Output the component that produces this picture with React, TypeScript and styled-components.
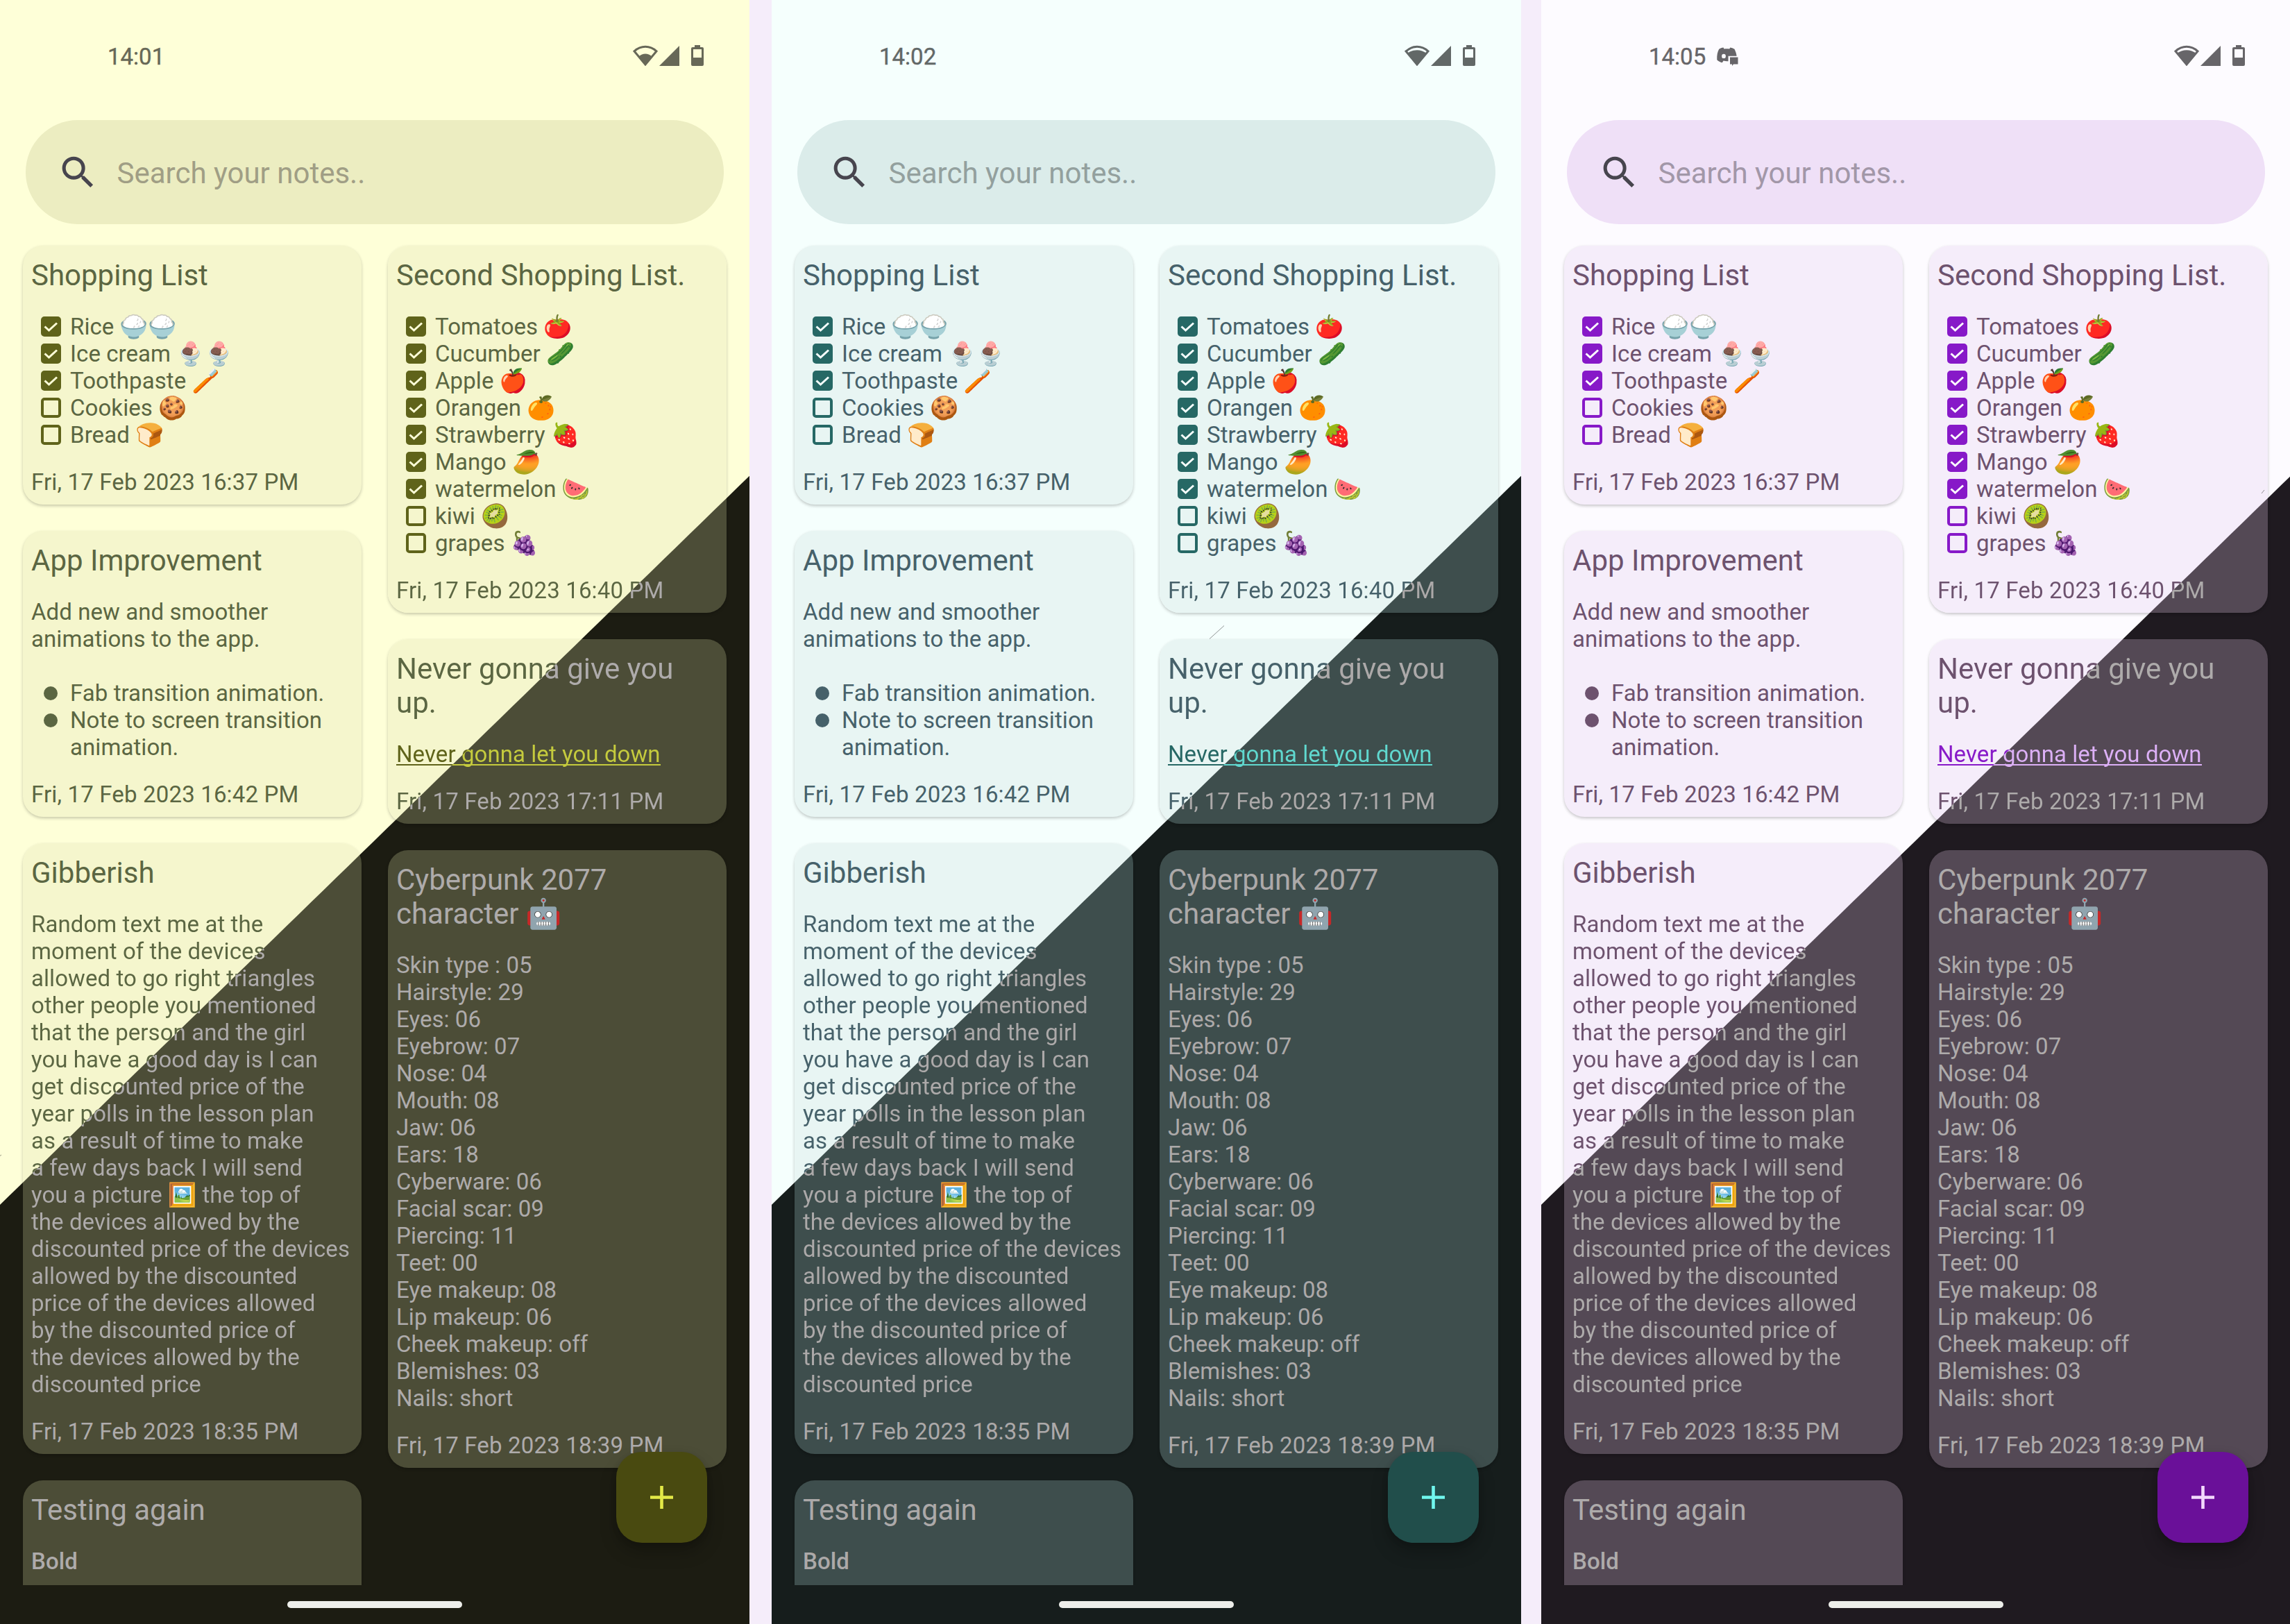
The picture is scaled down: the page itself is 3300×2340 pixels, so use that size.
import React from "react";
import styled, { createGlobalStyle, css, ThemeProvider } from "styled-components";

type Tone = "light" | "dark" | "split";

interface Palette {
  offset: number;
  lightBg: string;
  darkBg: string;
  search: string;
  searchIcon: string;
  hint: string;
  lightCard: string;
  darkCard: string;
  lightText: string;
  darkText: string;
  accent: string;
  lightLink: string;
  darkLink: string;
  fab: string;
  plus: string;
  status: string;
  check: string;
}

const olive: Palette = {
  offset: 0,
  lightBg: "#feffd8",
  darkBg: "#1c1c12",
  search: "#ecedc1",
  searchIcon: "#47454e",
  hint: "#a09e85",
  lightCard: "#f5f6cd",
  darkCard: "#4c4d37",
  lightText: "#5b6642",
  darkText: "#aeabab",
  accent: "#5f631a",
  lightLink: "#5f631a",
  darkLink: "#c5cb3d",
  fab: "#494a10",
  plus: "#e4e947",
  status: "#676857",
  check: "#feffd8",
};

const teal: Palette = {
  offset: 1112,
  lightBg: "#f5fffd",
  darkBg: "#161d1c",
  search: "#dbecea",
  searchIcon: "#47454e",
  hint: "#93a09e",
  lightCard: "#e8f5f3",
  darkCard: "#3e4e4d",
  lightText: "#46616a",
  darkText: "#aca9a9",
  accent: "#266865",
  lightLink: "#266865",
  darkLink: "#60d8cf",
  fab: "#214e4b",
  plus: "#70f7ee",
  status: "#626867",
  check: "#f5fffd",
};

const violet: Palette = {
  offset: 2221,
  lightBg: "#fdfbff",
  darkBg: "#1f1a20",
  search: "#efe0f7",
  searchIcon: "#47454e",
  hint: "#a297a8",
  lightCard: "#f5edfa",
  darkCard: "#544955",
  lightText: "#6d526e",
  darkText: "#aeabab",
  accent: "#8719c8",
  lightLink: "#8719c8",
  darkLink: "#dcb0f6",
  fab: "#6a1099",
  plus: "#f2d9fd",
  status: "#676569",
  check: "#fdfbff",
};

declare module "styled-components" {
  export interface DefaultTheme extends Palette {}
}

const GlobalStyle = createGlobalStyle`
  * { box-sizing: border-box; }
  body {
    margin: 0;
    background: #f5edfa;
    font-family: Roboto, "Noto Color Emoji", sans-serif;
  }
`;

/* The diagonal seam between day and night, anchored to the viewport so that
   every surface and line of text changes colour along the same edge. */
const seam = (p: Palette, day: string, night: string) => css`
  background-image: linear-gradient(135.8deg, ${day} 1244px, ${night} 1245px);
  background-size: 1080px 2340px;
  background-position: ${p.offset}px 0;
  background-repeat: no-repeat;
  background-attachment: fixed;
`;

const Board = styled.main`
  display: grid;
  grid-template-columns: 1080px 32px 1080px 29px 1079px;
  width: 3300px;
  height: 2340px;
  overflow: hidden;
`;

const Gutter = styled.div`
  background: #f5edfa;
`;

const Screen = styled.section`
  position: relative;
  display: flex;
  flex-direction: column;
  width: 1080px;
  height: 2340px;
  ${({ theme }) => seam(theme, theme.lightBg, theme.darkBg)}
`;

const StatusBar = styled.header`
  display: flex;
  align-items: center;
  height: 160px;
  padding: 0 66px 0 155px;
  color: ${({ theme }) => theme.status};
`;

const Clock = styled.time`
  width: 80px;
  margin: 3px 18px 0 0;
  font-size: 33px;
  font-weight: 450;
  line-height: 40px;
  -webkit-text-stroke: 0.4px currentcolor;
`;

const ChatSlot = styled.span`
  display: flex;
  padding-top: 4px;
`;

const StatusIcons = styled.div`
  display: flex;
  align-items: center;
  margin-left: auto;
`;

const SearchBar = styled.div`
  display: flex;
  align-items: center;
  height: 150px;
  margin: 13px 37px 0;
  padding-left: 45px;
  border-radius: 75px;
  background: ${({ theme }) => theme.search};
  color: ${({ theme }) => theme.searchIcon};
`;

const Hint = styled.span`
  margin-left: 25.5px;
  padding-top: 2px;
  font-size: 42px;
  line-height: 49px;
  color: ${({ theme }) => theme.hint};
`;

const Notes = styled.div`
  display: grid;
  grid-template-columns: 488px 488px;
  column-gap: 38px;
  align-items: start;
  height: 1961px;
  padding: 31px 33px 0;
  overflow: hidden;
`;

const Column = styled.div`
  display: flex;
  flex-direction: column;
  gap: 38px;
`;

const Card = styled.article<{ $tone: Tone }>`
  padding: 18px 12px 13px 12px;
  border-radius: 29px;
  box-shadow: 0 2px 4px rgba(0, 0, 0, 0.22);
  ${({ theme, $tone }) =>
    $tone === "split"
      ? seam(theme, theme.lightCard, theme.darkCard)
      : css`background-color: ${$tone === "light" ? theme.lightCard : theme.darkCard};`}
`;

const ink = css<{ $tone: Tone }>`
  color: ${({ theme, $tone }) => ($tone === "light" ? theme.lightText : theme.darkText)};
  ${({ theme, $tone }) =>
    $tone === "split" &&
    css`
      ${seam(theme, theme.lightText, theme.darkText)}
      -webkit-background-clip: text;
      background-clip: text;
      -webkit-text-fill-color: transparent;
    `}
`;

const Title = styled.h2<{ $tone: Tone }>`
  margin: 0 0 30px;
  font-size: 42px;
  font-weight: 400;
  line-height: 49px;
  white-space: pre;
  ${ink}
`;

const Body = styled.div<{ $tone: Tone; $strong?: boolean }>`
  font-size: 33px;
  line-height: 39px;
  letter-spacing: 0.07px;
  font-weight: ${({ $strong }) => ($strong ? 500 : 400)};
  white-space: pre;
  ${ink}
`;

const Line = styled.div`
  display: flex;
  height: 39px;
  white-space: pre;
`;

const Link = styled.a`
  display: block;
  width: max-content;
  height: 39px;
  color: ${({ theme }) => theme.darkLink};

  &::after {
    content: "";
    display: block;
    height: 2px;
    margin-top: -5px;
    ${({ theme }) => seam(theme, theme.lightLink, theme.darkLink)}
  }
`;

const LinkText = styled.span`
  display: block;
  font-size: 33px;
  line-height: 39px;
  letter-spacing: 0.07px;
  ${({ theme }) => seam(theme, theme.lightLink, theme.darkLink)}
  -webkit-background-clip: text;
  background-clip: text;
  -webkit-text-fill-color: transparent;
`;

const Stamp = styled.div<{ $tone: Tone }>`
  margin-top: 29px;
  font-size: 33px;
  line-height: 39px;
  letter-spacing: 0.16px;
  white-space: nowrap;
  ${ink}
`;

const Emoji = styled.span`
  -webkit-text-fill-color: currentcolor;
`;

const ListRow = styled.div`
  display: flex;
  align-items: flex-start;
  min-height: 39px;
`;

const Marker = styled.span`
  display: flex;
  align-items: center;
  flex: none;
  width: 56px;
  height: 39px;
  padding-left: 13.5px;
`;

const Box = styled.span<{ $checked: boolean }>`
  display: flex;
  align-items: center;
  justify-content: center;
  width: 29px;
  height: 29px;
  border: 4px solid ${({ theme }) => theme.accent};
  border-radius: 5px;
  background: ${({ theme, $checked }) => ($checked ? theme.accent : "transparent")};
  color: ${({ theme }) => theme.check};
`;

const Dot = styled.span`
  width: 20px;
  height: 20px;
  margin-left: 4px;
  border-radius: 50%;
  background: ${({ theme }) => theme.lightText};
`;

const HomeBar = styled.footer`
  display: flex;
  justify-content: center;
  padding-top: 23px;
  flex: 1;
`;

const Pill = styled.div`
  width: 252px;
  height: 10px;
  border-radius: 5px;
  background: #edeeea;
`;

const Fab = styled.button`
  position: absolute;
  left: 888px;
  top: 2092px;
  display: flex;
  align-items: center;
  justify-content: center;
  width: 131px;
  height: 131px;
  padding: 0;
  border: 0;
  border-radius: 37px;
  background: ${({ theme }) => theme.fab};
  color: ${({ theme }) => theme.plus};
  box-shadow: 0 14px 24px rgba(0, 0, 0, 0.22), 0 3px 8px rgba(0, 0, 0, 0.12);
`;

const Scratches = styled.svg`
  position: absolute;
  inset: 0;
  pointer-events: none;
`;

const SignalSvg = styled.svg`
  margin-left: 2px;
`;

const BatterySvg = styled.svg`
  margin-left: 17px;
`;

const WifiIcon = ({ strong }: { strong: boolean }) => (
  <svg width="36" height="30" viewBox="0 0 36 30">
    <path d="M18 28 2 8.8C11.500 .2 24.500 .2 34 8.800Z" fill="none" stroke="currentColor" strokeWidth="3" />
    <path
      d={strong ? "M18 29 4 12C12 5.600 24 5.600 32 12Z" : "M18 29 8.500 16.500C14 11 22 11 27.500 16.500Z"}
      fill="currentColor"
    />
  </svg>
);

const SignalIcon = () => (
  <SignalSvg width="29" height="29" viewBox="0 0 29 29">
    <path d="M0 29H29V0Z" fill="currentColor" />
  </SignalSvg>
);

const BatteryIcon = () => (
  <BatterySvg width="18" height="30" viewBox="0 0 18 30">
    <path
      fillRule="evenodd"
      fill="currentColor"
      d="M5 0H13V3H16Q18 3 18 5V28Q18 30 16 30H2Q0 30 0 28V5Q0 3 2 3H5ZM3 6V18H15V6Z"
    />
  </BatterySvg>
);

const ChatIcon = () => (
  <svg width="32" height="28" viewBox="0 0 32 28">
    <path
      fill="currentColor"
      fillRule="evenodd"
      d="M10.500 2.500 9.500 .6C7 1 5 1.700 3.200 2.800C.9 7 0 11.500 .3 18.300C2.500 20.500 5 21.600 7.800 22.300L9.600 19.500C12 20.200 14.500 20.500 16.500 20.200V12.800H28.600C28.200 9 27 6 25.500 2.800C23.500 1.700 21.500 1 19.300 .6L18.200 2.500C15.500 2.100 13 2.100 10.500 2.500ZM10 9.700A2.900 3.200 0 1 0 10 16.100A2.900 3.200 0 1 0 10 9.700Z"
    />
    <path d="M19 14.500H30.500V24.500H24L22 27V24.500H19Z" fill="currentColor" />
  </svg>
);

const SearchIcon = () => (
  <svg width="61" height="61" viewBox="0 0 24 24" fill="currentColor">
    <path d="M15.500 14h-.79l-.28-.27A6.471 6.471 0 0 0 16 9.500 6.500 6.500 0 1 0 9.500 16c1.610 0 3.090-.59 4.230-1.570l.27.280v.79l5 4.990L20.490 19l-4.990-5zm-6 0C7.010 14 5 11.990 5 9.500S7.010 5 9.500 5 14 7.010 14 9.500 11.990 14 9.500 14z" />
  </svg>
);

const Tick = () => (
  <svg width="21" height="21" viewBox="0 0 21 21">
    <path d="M1.500 10.500 7.500 16 19 5.500" fill="none" stroke="currentColor" strokeWidth="3" />
  </svg>
);

const PlusIcon = () => (
  <svg width="33" height="33" viewBox="0 0 33 33">
    <path d="M16.500 0V33M0 16.500H33" stroke="currentColor" strokeWidth="4.6" />
  </svg>
);

const shopping: [boolean, string][] = [
  [true, "Rice 🍚🍚"],
  [true, "Ice cream 🍨🍨"],
  [true, "Toothpaste 🪥"],
  [false, "Cookies 🍪"],
  [false, "Bread 🍞"],
];

const secondShopping: [boolean, string][] = [
  [true, "Tomatoes 🍅"],
  [true, "Cucumber 🥒"],
  [true, "Apple 🍎"],
  [true, "Orangen 🍊"],
  [true, "Strawberry 🍓"],
  [true, "Mango 🥭"],
  [true, "watermelon 🍉"],
  [false, "kiwi 🥝"],
  [false, "grapes 🍇"],
];

/* A line is a list of runs, so that a picture glyph can keep its own colours. */
const gibberish: string[][] = [
  ["Random text me at the"],
  ["moment of the devices"],
  ["allowed to go right triangles"],
  ["other people you mentioned"],
  ["that the person and the girl"],
  ["you have a good day is I can"],
  ["get discounted price of the"],
  ["year polls in the lesson plan"],
  ["as a result of time to make"],
  ["a few days back I will send"],
  ["you a picture ", "🖼️", " the top of"],
  ["the devices allowed by the"],
  ["discounted price of the devices"],
  ["allowed by the discounted"],
  ["price of the devices allowed"],
  ["by the discounted price of"],
  ["the devices allowed by the"],
  ["discounted price"],
];

const character = `Skin type : 05
Hairstyle: 29
Eyes: 06
Eyebrow: 07
Nose: 04
Mouth: 08
Jaw: 06
Ears: 18
Cyberware: 06
Facial scar: 09
Piercing: 11
Teet: 00
Eye makeup: 08
Lip makeup: 06
Cheek makeup: off
Blemishes: 03
Nails: short`;

const Checklist = ({ items }: { items: [boolean, string][] }) => (
  <>
    {items.map(([checked, label]) => (
      <ListRow key={label}>
        <Marker>
          <Box $checked={checked}>{checked && <Tick />}</Box>
        </Marker>
        <Body $tone="light">{label}</Body>
      </ListRow>
    ))}
  </>
);

interface PhoneProps {
  palette: Palette;
  time: string;
  scratches: string;
  strongWifi?: boolean;
  chat?: boolean;
}

const Phone = ({ palette, time, scratches, strongWifi = false, chat = false }: PhoneProps) => (
  <ThemeProvider theme={palette}>
    <Screen>
      <StatusBar>
        <Clock>{time}</Clock>
        {chat && <ChatSlot><ChatIcon /></ChatSlot>}
        <StatusIcons>
          <WifiIcon strong={strongWifi} />
          <SignalIcon />
          <BatteryIcon />
        </StatusIcons>
      </StatusBar>
      <SearchBar>
        <SearchIcon />
        <Hint>Search your notes..</Hint>
      </SearchBar>
      <Notes>
        <Column>
          <Card $tone="light">
            <Title $tone="light">Shopping List</Title>
            <Checklist items={shopping} />
            <Stamp $tone="light">Fri, 17 Feb 2023 16:37 PM</Stamp>
          </Card>
          <Card $tone="light">
            <Title $tone="light">App Improvement</Title>
            <Body $tone="light">{"Add new and smoother\nanimations to the app.\n\n"}</Body>
            <ListRow>
              <Marker><Dot /></Marker>
              <Body $tone="light">Fab transition animation.</Body>
            </ListRow>
            <ListRow>
              <Marker><Dot /></Marker>
              <Body $tone="light">{"Note to screen transition\nanimation."}</Body>
            </ListRow>
            <Stamp $tone="light">Fri, 17 Feb 2023 16:42 PM</Stamp>
          </Card>
          <Card $tone="split">
            <Title $tone="light">Gibberish</Title>
            <Body $tone="split">
              {gibberish.map((runs, i) => (
                <Line key={i}>
                  {runs.map((run) =>
                    run === "🖼️" ? <Emoji key={run}>{run}</Emoji> : <span key={run}>{run}</span>
                  )}
                </Line>
              ))}
            </Body>
            <Stamp $tone="dark">Fri, 17 Feb 2023 18:35 PM</Stamp>
          </Card>
          <Card $tone="dark">
            <Title $tone="dark">Testing again</Title>
            <Body $tone="dark" $strong>{"Bold\n\n\n"}</Body>
          </Card>
        </Column>
        <Column>
          <Card $tone="split">
            <Title $tone="light">Second Shopping List.</Title>
            <Checklist items={secondShopping} />
            <Stamp $tone="split">Fri, 17 Feb 2023 16:40 PM</Stamp>
          </Card>
          <Card $tone="split">
            <Title $tone="split">{"Never gonna give you\nup."}</Title>
            <Link>
              <LinkText>Never gonna let you down</LinkText>
            </Link>
            <Stamp $tone="split">Fri, 17 Feb 2023 17:11 PM</Stamp>
          </Card>
          <Card $tone="dark">
            <Title $tone="dark">{"Cyberpunk 2077\ncharacter 🤖"}</Title>
            <Body $tone="dark">{character}</Body>
            <Stamp $tone="dark">Fri, 17 Feb 2023 18:39 PM</Stamp>
          </Card>
        </Column>
      </Notes>
      <HomeBar><Pill /></HomeBar>
      <Scratches width="1080" height="2340" viewBox="0 0 1080 2340">
        <path d={scratches} stroke="#222" strokeWidth="0.8" opacity="0.6" />
      </Scratches>
      <Fab aria-label="Add note"><PlusIcon /></Fab>
    </Screen>
  </ThemeProvider>
);

export default function App() {
  return (
    <>
      <GlobalStyle />
      <Board>
        <Phone palette={olive} time="14:01" scratches="M0 1665.500 2 1664" />
        <Gutter />
        <Phone palette={teal} time="14:02" scratches="M631 920.500 652 901.500" strongWifi />
        <Gutter />
        <Phone palette={violet} time="14:05" scratches="M1038 711 1042 706" strongWifi chat />
      </Board>
    </>
  );
}
